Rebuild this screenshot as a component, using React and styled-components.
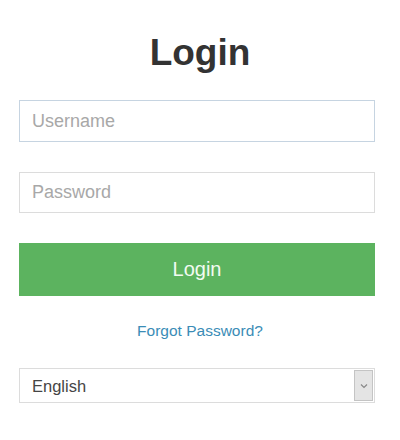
import React from "react";
import styled, { createGlobalStyle } from "styled-components";

const GlobalStyle = createGlobalStyle`
  body {
    margin: 0;
    background: #ffffff;
    font-family: "Liberation Sans", Arial, sans-serif;
  }
`;

const Page = styled.div`
  width: 400px;
  height: 440px;
  box-sizing: border-box;
  padding: 0 25px 0 19px;
  display: flex;
  flex-direction: column;
`;

const Title = styled.h1`
  margin: 34px 0 0;
  font-size: 37px;
  line-height: 37px;
  font-weight: 700;
  color: #333333;
  text-align: center;
  padding-left: 6px;
`;

const Field = styled.input`
  box-sizing: border-box;
  width: 100%;
  height: ${(p) => p.$h}px;
  margin-top: ${(p) => p.$top}px;
  padding: 0 12px;
  border: 1px solid ${(p) => (p.$focus ? "#c6d4e1" : "#dcdcdc")};
  border-radius: 0;
  font-family: inherit;
  font-size: 18px;
  color: #444;
  outline: none;
  &::placeholder {
    color: #a8a8a8;
  }
`;

const SubmitButton = styled.button`
  width: 100%;
  height: 53px;
  margin-top: 30px;
  border: none;
  background: #5cb35f;
  color: #f2fbf2;
  font-family: inherit;
  font-size: 20px;
  cursor: pointer;
`;

const ForgotLink = styled.a`
  display: block;
  margin-top: 26px;
  text-align: center;
  font-size: 15.5px;
  line-height: 18px;
  color: #3a8cb6;
  text-decoration: none;
  padding-left: 6px;
`;

const SelectWrap = styled.div`
  margin-top: 28px;
  height: 35px;
  box-sizing: border-box;
  border: 1px solid #dcdcdc;
  display: flex;
`;

const LanguageSelect = styled.select`
  flex: 1;
  appearance: none;
  border: none;
  background: transparent;
  padding: 0 12px;
  font-family: inherit;
  font-size: 16.5px;
  color: #454545;
  outline: none;
`;

const ArrowBox = styled.div`
  width: 17px;
  margin: 1px 1px 1px 0;
  background: #e4e4e4;
  border: 1px solid #c4c4c4;
  display: flex;
  align-items: center;
  justify-content: center;
`;

export default function App() {
  return (
    <>
      <GlobalStyle />
      <Page>
        <Title>Login</Title>
        <Field $top={29} $h={42} $focus placeholder="Username" />
        <Field $top={30} $h={41} type="password" placeholder="Password" />
        <SubmitButton>Login</SubmitButton>
        <ForgotLink href="#">Forgot Password?</ForgotLink>
        <SelectWrap>
          <LanguageSelect defaultValue="en">
            <option value="en">English</option>
          </LanguageSelect>
          <ArrowBox>
            <svg width="8" height="6" viewBox="0 0 8 6">
              <path d="M1 1.5 L4 4.5 L7 1.5" fill="none" stroke="#888" strokeWidth="1.2" />
            </svg>
          </ArrowBox>
        </SelectWrap>
      </Page>
    </>
  );
}
